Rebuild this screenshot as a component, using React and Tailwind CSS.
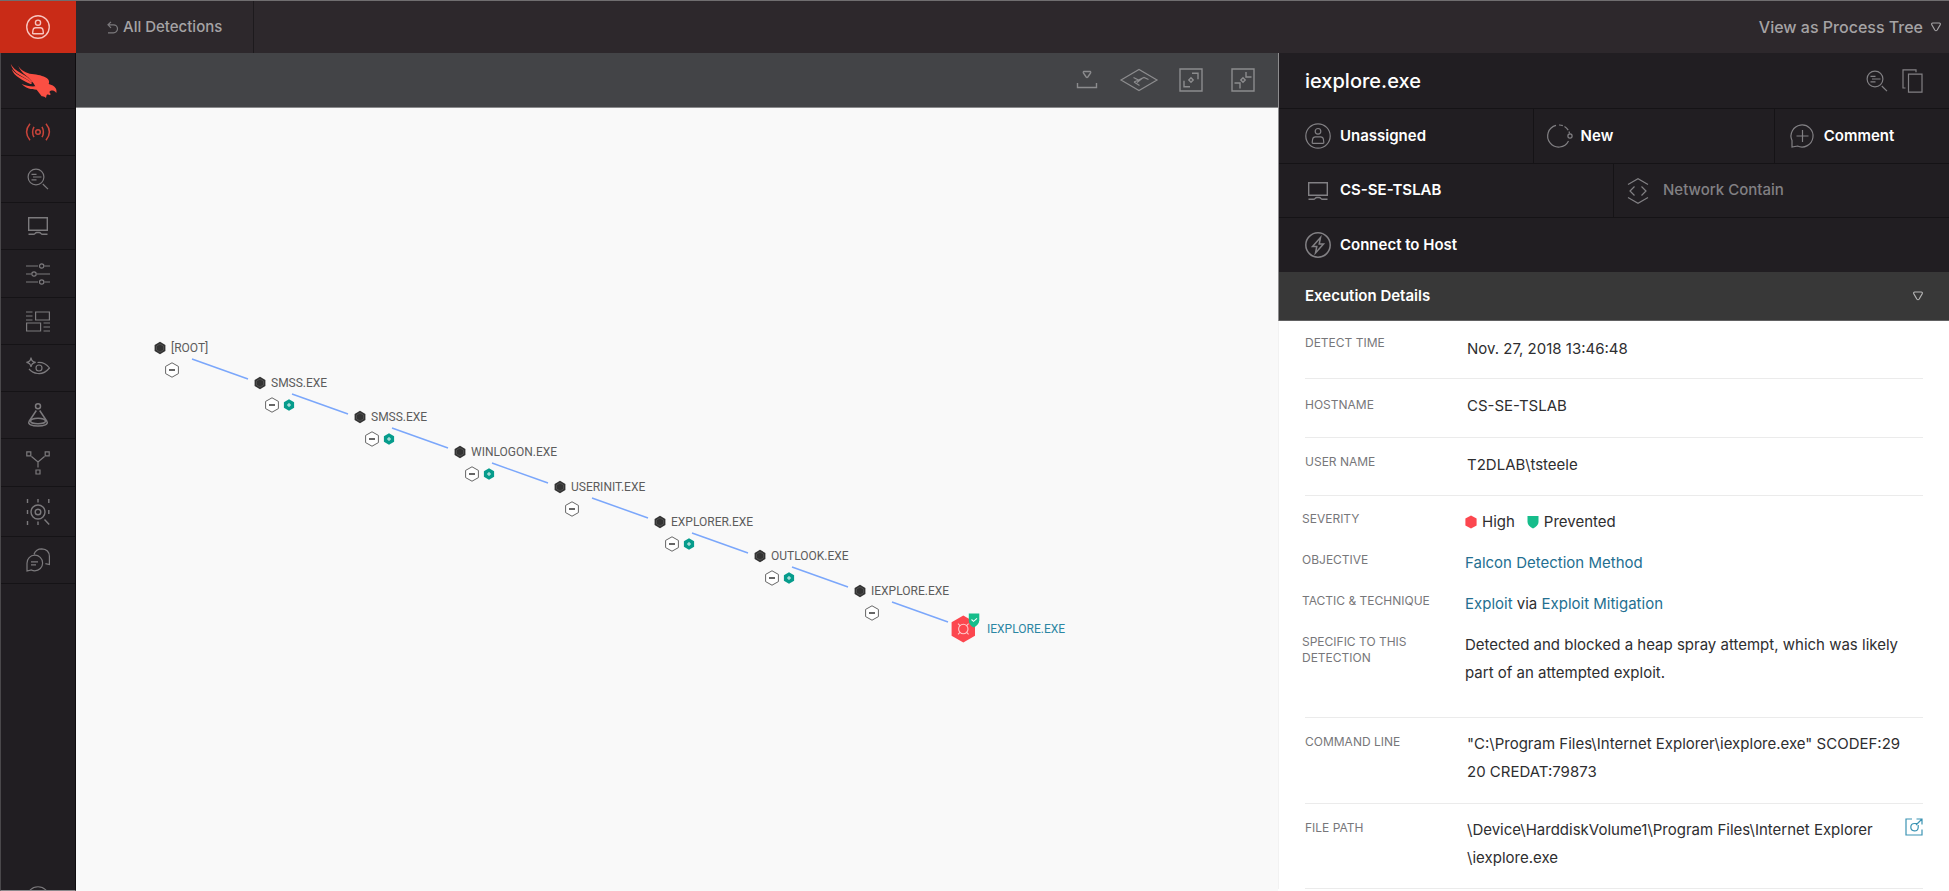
import React, { useState } from 'react';

const Icon = ({ w = 24, h = 24, sw = 1.2, className = '', children }) => (
    <svg
        width={w}
        height={h}
        viewBox={`0 0 ${w} ${h}`}
        fill="none"
        stroke="currentColor"
        strokeWidth={sw}
        className={`shrink-0 overflow-visible ${className}`}
        aria-hidden="true"
    >
        {children}
    </svg>
);

const UserCircle = ({ w = 26, sw = 1.2 }) => (
    <svg width={w} height={w} viewBox="0 0 26 26" fill="none" stroke="currentColor" strokeWidth={sw} className="shrink-0" aria-hidden="true">
        <circle cx="13" cy="13" r="12.2" />
        <circle cx="13" cy="8.3" r="2.8" />
        <path d="M8 20.3q-.9 0-.8-1l.4-3q.3-2.500 2.800-2.500h5.200q2.500 0 2.800 2.500l.4 3q.1 1-.8 1z" />
    </svg>
);

const Falcon = () => (
    <svg width="48" height="36" viewBox="30 186 144 108" fill="#fb4f43" aria-hidden="true">
        <path d="M55 194C63 208 78 216 96 219C112 221 130 224 140 231C147 236 149 243 146 249C155 251 163 255 167 262C170 267 170 272 169 276C164 269 158 268 152 269C147 271 148 275 152 279L150 283C146 280 142 280 140 282L138 291C134 288 130 285 125 286C120 280 115 272 110 266C94 266 78 262 65 249C78 255 92 257 106 256C100 244 88 232 76 222C66 214 59 205 55 194z" />
        <path d="M32 188C38 200 48 208 62 216C76 224 89 232 97 243L94 245C84 236 72 230 60 223C45 214 35 202 32 188z" />
        <path d="M35 204C44 216 56 223 68 229C80 235 90 240 96 248L91 249C80 244 68 238 58 231C46 224 38 215 35 204z" />
    </svg>
);

const Signal = () => (
    <Icon sw={1.5}>
        <circle cx="12" cy="12" r="2.3" />
        <path d="M8 6.8Q5.2 12 8 17.2M16 6.8Q18.8 12 16 17.2M4 3.8Q-2.8 12 4 20.2M20 3.8Q26.8 12 20 20.2" />
    </Icon>
);

const SearchLines = () => (
    <Icon>
        <circle cx="10" cy="10" r="7.9" />
        <path d="M5.5 7.3h5M7 10h8.5M5.5 12.8h5M16.8 17l5.2 5.2" />
    </Icon>
);

const Monitor = () => (
    <Icon sw={1.4}>
        <path d="M2.7 3.7h18.6v12.6H2.7zM2.5 20.3h5q1 0 1.7-.9t1.6-.9h2.4q.9 0 1.6.9t1.7.9h5" />
    </Icon>
);

const Sliders = () => (
    <Icon>
        <path d="M0 4h12M18.5 4H24M0 12h5M11 12h13M0 20h12M18.5 20H24" />
        <circle cx="15.7" cy="4" r="2.2" />
        <circle cx="8" cy="12" r="2.2" />
        <circle cx="15.7" cy="20" r="2.2" />
    </Icon>
);

const Dashboard = () => (
    <Icon>
        <path d="M9.6 3h13.8v8H9.6zM.6 14h14v8H.6zM0 3h6.5M0 7h6.5M0 11h6.5M17.5 14H24M17.5 18H24M17.5 22H24" />
    </Icon>
);

const Eye = () => (
    <Icon>
        <path d="M5 1.6q.5 4.2 4.7 4.7Q5.5 6.8 5 11 4.5 6.8.4 6.3 4.5 5.8 5 1.6zM11.5 6.500q7-.8 12 5.500-5.500 6.500-12 5.500-5-.5-8.500-4.500" />
        <circle cx="13" cy="12" r="3" />
    </Icon>
);

const Flask = () => (
    <Icon sw={1.5}>
        <circle cx="12" cy="3.3" r="2.5" />
        <path d="M10.3 7.5L3 18.5M13.7 7.5L21 18.5M3 18.5c-1.5 3 3 4.5 9 4.5s10.5-1.5 9-4.5" />
        <ellipse cx="12" cy="18" rx="7.5" ry="2.8" />
    </Icon>
);

const Branch = () => (
    <Icon>
        <path d="M.8.8h4v4h-4zM19.2.8h4v4h-4zM10 19h4v4h-4zM5.5 5.5l6.5 5.5 6.5-5.5M12 11v5.5" />
    </Icon>
);

const Target = () => (
    <Icon h={26} sw={1.4}>
        <circle cx="12" cy="13" r="7" />
        <circle cx="12" cy="13" r="2.8" />
        <path d="M1.5 0v4M12 0v3.5M22.8 0v4M1.5 11v4M22.8 11v4M1.5 22v4M12 22.5V26M18.5 20.5l4.7 5" />
    </Icon>
);

const Chats = () => (
    <Icon>
        <path d="M1 23V15.2a7.8 7.8 0 1 1 7.8 7.6q-1.8 0-3.4-.8zM8 6.3Q10 .8 15.8.8q7.4.5 7.6 7.5v8.2l-4-.8M5 13.8h7M5 16.8h5" />
    </Icon>
);

const Undo = () => (
    <Icon w={11} h={13}>
        <path d="M4 .8L1 3.8l3 3M1 3.8h5.5a3.800 3.800 0 0 1 0 8H1" />
    </Icon>
);

const Caret = () => (
    <Icon w={12} h={10}>
        <path d="M2.8 1h6.4q1.6.2 1 1.7L7.2 8q-1.2 1.5-2.4 0L1.8 2.7q-.6-1.5 1-1.7z" />
    </Icon>
);

const Download = () => (
    <Icon sw={1.4}>
        <path d="M9 3.5h6q1 .3.6 1.3L12.8 9q-.8 1-1.6 0L8.4 4.8Q8 3.8 9 3.5zM2.5 15v4.5h19V15" />
    </Icon>
);

const Diamond = () => (
    <Icon w={38} h={24}>
        <path d="M1 12L19 1.5 37 12 19 22.5zM13.5 9.5l5 2.5 5.5-2.5 4.5 2M22 10.5L17 14.5M18.5 12l-4.5 2M14 14l5.5 3.5" />
    </Icon>
);

const Expand = () => (
    <Icon sw={1.4}>
        <path d="M1 1h22v22H1zM13 5.2h6v6M11 18.8H5v-6M12 9.8l2.2 2.2-2.2 2.2L9.8 12z" />
    </Icon>
);

const Collapse = () => (
    <Icon sw={1.4}>
        <path d="M1 1h22v22H1zM15 4v5h5.5M3.5 15H9v5.5M12 9.8l2.2 2.2-2.2 2.2L9.8 12z" />
    </Icon>
);

const Copy = () => (
    <Icon>
        <path d="M7.5 5.2h13.5v18H7.5zM4.5 19H2V.8h13v2.5" />
    </Icon>
);

const Progress = () => (
    <Icon w={26} h={26}>
        <path d="M10 2.4A11 11 0 1 0 22.5 18M13 2q2-.1 3.8.6M18.5 3.5q2.3 1.3 3.7 3.6M23 8.5l.5 1.8" />
        <circle cx="24" cy="13" r="2.1" />
    </Icon>
);

const CommentPlus = () => (
    <Icon>
        <path d="M2 23V16.5A11 11 0 1 1 7.5 22zM12.5 6v12M6.5 12h12" />
    </Icon>
);

const Contain = () => (
    <Icon w={22} h={26}>
        <path d="M1 6.5l10-5.7 10 5.7M1 19.5l10 5.7 10-5.7M7.5 8.5L3 13l4.5 4.5M14.5 8.5L19 13l-4.5 4.5" />
    </Icon>
);

const Bolt = () => (
    <Icon w={26} h={26} sw={1.5}>
        <circle cx="13" cy="13" r="12.2" />
        <path d="M15.5 5.5l-8 9h4.3l-1.3 6.5 8-9h-4.3z" />
    </Icon>
);

const OpenLink = () => (
    <Icon w={18} h={18}>
        <path d="M7 1H1v16h16v-5.5M11.5 1H17v5.5M17 1l-6 6M12 5.5H9.5a3.7 3.7 0 1 0 3.7 4V7" />
    </Icon>
);

const navItems = [
    { label: 'Activity', icon: Signal, height: 'h-[47px]', active: true },
    { label: 'Investigate', icon: SearchLines, height: 'h-[47px]' },
    { label: 'Hosts', icon: Monitor, height: 'h-[47px]' },
    { label: 'Configuration', icon: Sliders, height: 'h-12' },
    { label: 'Dashboards', icon: Dashboard, height: 'h-[47px]' },
    { label: 'Discover', icon: Eye, height: 'h-[47px]' },
    { label: 'Intelligence', icon: Flask, height: 'h-[47px]' },
    { label: 'Graph', icon: Branch, height: 'h-12' },
    { label: 'Search', icon: Target, height: 'h-[50px]' },
    { label: 'Support', icon: Chats, height: 'h-[47px]' },
];

const processes = [
    { name: '[ROOT]' },
    { name: 'SMSS.EXE', more: true },
    { name: 'SMSS.EXE', more: true },
    { name: 'WINLOGON.EXE', more: true },
    { name: 'USERINIT.EXE' },
    { name: 'EXPLORER.EXE', more: true },
    { name: 'OUTLOOK.EXE', more: true },
    { name: 'IEXPLORE.EXE' },
];

const nodeX = (i) => 84 + i * 100;
const nodeY = (i) => 240 + Math.round(i * 34.7);

const Sidebar = () => (
    <nav className="w-[76px] shrink-0 flex flex-col bg-[#211e22] border-l border-l-[#4a484b] border-r border-r-[#0f0d10] border-b border-b-[#8b898c] overflow-hidden">
        <a href="#home" aria-label="Falcon" className="h-14 shrink-0 flex items-center justify-center pr-2 border-b border-[#151316]">
            <Falcon />
        </a>
        {navItems.map(({ label, icon: NavIcon, height, active }) => (
            <button
                key={label}
                aria-label={label}
                className={`${height} shrink-0 flex items-center justify-center border-b border-[#151316] ${active ? 'text-[#c8443a]' : 'text-[#7c7a7d]'}`}
            >
                <NavIcon />
            </button>
        ))}
        <button aria-label="Account" className="mt-auto h-1 shrink-0 flex items-start justify-center overflow-hidden text-[#7c7a7d]">
            <UserCircle w={24} />
        </button>
    </nav>
);

const ProcessNode = ({ name, more, x, y }) => (
    <div className="absolute" style={{ left: x - 6, top: y - 8 }}>
        <div className="flex items-center gap-[5px] h-4 font-['Roboto','Liberation_Sans',sans-serif] text-xs text-[#5c5c5c] whitespace-nowrap">
            <svg width="12" height="14" viewBox="0 0 12 14" aria-hidden="true">
                <path d="M6 .8l5.4 3.1v6.2L6 13.2.6 10.1V3.9z" fill="#333" />
                <path d="M6 3l3.5 2v4L6 11 2.5 9V5z" fill="none" stroke="#555" strokeWidth=".8" />
            </svg>
            {name}
        </div>
        <div className="flex items-center gap-[3px] pl-[10px] pt-[6px]">
            <button aria-label={`Collapse ${name}`}>
                <svg width="16" height="16" viewBox="0 0 16 16" fill="#fff" stroke="#666" className="block">
                    <path d="M8 .8l6.4 3.6v7.2L8 15.2l-6.4-3.6V4.4z" />
                    <path d="M5 8h6" stroke="#333" strokeWidth="1.5" />
                </svg>
            </button>
            {more && (
                <button aria-label={`Show more of ${name}`}>
                    <svg width="12" height="12" viewBox="0 0 12 12" className="block">
                        <path d="M6 .3l5.1 2.9v5.6L6 11.7.9 8.8V3.2z" fill="#069c8c" />
                        <path d="M6 4v4M4 6h4" stroke="#d9f2ef" />
                    </svg>
                </button>
            )}
        </div>
    </div>
);

const ProcessTree = () => (
    <div className="relative flex-1 min-h-0 bg-[#f9f9f9] overflow-hidden">
        <svg className="absolute inset-0 w-full h-full" stroke="#7ba7fb" strokeWidth="1.5" aria-hidden="true">
            {processes.map((p, i) => (
                <line key={i} x1={nodeX(i) + 32} y1={nodeY(i) + 11} x2={nodeX(i) + 88} y2={nodeY(i) + 31} />
            ))}
        </svg>
        {processes.map((p, i) => (
            <ProcessNode key={i} {...p} x={nodeX(i)} y={nodeY(i)} />
        ))}
        <button className="absolute left-[874px] top-[505px] flex items-center gap-[7px] font-['Roboto','Liberation_Sans',sans-serif] text-xs text-[#2b86a3]">
            <svg width="30" height="32" viewBox="0 0 30 32" aria-hidden="true">
                <path d="M13.3 2.5l11.7 6.800v13.400l-11.700 6.800L1.600 22.700V9.300z" fill="#fc474f" />
                <g fill="none" stroke="#ffc9cb" strokeWidth="1.1">
                    <path d="M8 10.7l2.2 2.2M18.6 10.7l-2.2 2.2M8 21.3l2.2-2.2M18.6 21.3l-2.2-2.2" />
                    <circle cx="13.3" cy="16" r="4.7" />
                </g>
                <path d="M18.8.5h10.5v6.7c0 3.3-2.5 5.6-5.8 7.3-2.8-1.7-4.7-4-4.7-7.3z" fill="#16bd8b" />
                <path d="M21.5 6.5l2 1.8 3.5-3" fill="none" stroke="#fff" strokeWidth="1.1" />
            </svg>
            IEXPLORE.EXE
        </button>
    </div>
);

const Action = ({ icon: ActionIcon, className = '', children }) => (
    <button className={`h-full flex items-center text-[15px] font-semibold text-white ${className}`}>
        <span className="w-[26px] flex justify-center text-[#828084]">
            <ActionIcon />
        </span>
        {children}
    </button>
);

const DetailRow = ({ label, top = 'pt-4', className = '', children }) => (
    <div className={`flex items-start border-b border-[#ebebeb] ${className}`}>
        <dt className={`w-[162px] shrink-0 text-xs leading-4 text-[#77777a] ${top}`}>{label}</dt>
        <dd className="flex-1 min-w-0">{children}</dd>
    </div>
);

// Rows of the severity group share one divider
const DetectionRow = ({ label, children }) => (
    <div className="flex items-start">
        <dt className="w-[163px] pr-8 shrink-0 text-xs leading-4 text-[#77777a] pt-[3px]">{label}</dt>
        <dd className="flex-1 min-w-0">{children}</dd>
    </div>
);

const ExecutionDetails = () => (
    <dl className="px-[26px] text-[15px] leading-7 text-[#2e2e30] bg-white border-l border-[#f2f2f2]">
        <DetailRow label="DETECT TIME" top="pt-[14px]" className="h-[58px]">
            <p className="pt-[14px]">Nov. 27, 2018 13:46:48</p>
        </DetailRow>
        <DetailRow label="HOSTNAME" top="pt-[18px]" className="h-[59px]">
            <p className="pt-[13px]">CS-SE-TSLAB</p>
        </DetailRow>
        <DetailRow label="USER NAME" className="h-[58px]">
            <p className="pt-[13px]">T2DLAB\tsteele</p>
        </DetailRow>
        <div className="border-b border-[#ebebeb] pt-3 pb-[30px]">
            <div className="-ml-[3px] flex flex-col gap-[13px]">
                <DetectionRow label="SEVERITY">
                    <div className="flex items-center">
                        <svg width="12" height="14" viewBox="0 0 12 14" aria-hidden="true" className="mr-[5px]">
                            <path d="M6 .5l5.6 3v7L6 13.5.4 10.5v-7z" fill="#fc474f" />
                        </svg>
                        High
                        <svg width="12" height="14" viewBox="0 0 12 14" aria-hidden="true" className="ml-3 mr-[5px]">
                            <path d="M.5 1h11v6c0 3-2.5 5-5.5 6.5C3 12 .5 10 .5 7z" fill="#16bd8b" />
                        </svg>
                        Prevented
                    </div>
                </DetectionRow>
                <DetectionRow label="OBJECTIVE">
                    <a href="#objective" className="text-[#246f91]">Falcon Detection Method</a>
                </DetectionRow>
                <DetectionRow label="TACTIC &amp; TECHNIQUE">
                    <a href="#tactic" className="text-[#246f91]">Exploit</a> via{' '}
                    <a href="#technique" className="text-[#246f91]">Exploit Mitigation</a>
                </DetectionRow>
                <DetectionRow label="SPECIFIC TO THIS DETECTION">
                    Detected and blocked a heap spray attempt, which was likely part of an attempted exploit.
                </DetectionRow>
            </div>
        </div>
        <DetailRow label="COMMAND LINE" className="pb-[17px]">
            <p className="pt-3">"C:\Program Files\Internet Explorer\iexplore.exe" SCODEF:29<br />20 CREDAT:79873</p>
        </DetailRow>
        <DetailRow label="FILE PATH" className="pb-4">
            <div className="flex items-start justify-between pt-3">
                <p>\Device\HarddiskVolume1\Program Files\Internet Explorer<br />\iexplore.exe</p>
                <a href="#file" aria-label="Open file path" className="pt-[2px] text-[#3b93b3]">
                    <OpenLink />
                </a>
            </div>
        </DetailRow>
    </dl>
);

const DetailsPanel = () => {
    const [open, setOpen] = useState(true);

    return (
        <aside className="w-[671px] shrink-0 flex flex-col bg-white overflow-hidden">
            <div className="shrink-0 border-l border-[#8d8c8e] bg-[#211e22]">
                <header className="h-14 flex items-center justify-between pl-[26px] pr-6 border-b border-[#151316]">
                    <h1 className="text-xl font-medium text-white">iexplore.exe</h1>
                    <div className="flex gap-3 text-[#828084]">
                        <button aria-label="Investigate"><SearchLines /></button>
                        <button aria-label="Copy"><Copy /></button>
                    </div>
                </header>
                <div className="h-[55px] flex border-b border-[#151316]">
                    <Action icon={UserCircle} className="w-[38%] pl-[26px] gap-[9px] border-r border-[#151316]">Unassigned</Action>
                    <Action icon={Progress} className="w-[36%] pl-3 gap-[9px] border-r border-[#151316]">New</Action>
                    <Action icon={CommentPlus} className="flex-1 pl-[14px] gap-[9px]">Comment</Action>
                </div>
                <div className="h-[54px] flex border-b border-[#151316]">
                    <Action icon={Monitor} className="w-1/2 pl-[26px] gap-[9px] border-r border-[#151316]">CS-SE-TSLAB</Action>
                    <button className="flex-1 flex items-center pl-[13px] gap-[14px] text-[15px] font-medium text-[#828084]">
                        <Contain />
                        Network Contain
                    </button>
                </div>
                <div className="h-[54px] flex">
                    <Action icon={Bolt} className="pl-[26px] gap-[9px]">Connect to Host</Action>
                </div>
                <button
                    onClick={() => setOpen(!open)}
                    className="w-full h-[49px] flex items-center justify-between pl-[26px] pr-[25px] bg-[#383838] border-b border-[#616162] text-[15px] font-semibold text-white"
                >
                    Execution Details
                    <span className="text-[#b5b5b5]"><Caret /></span>
                </button>
            </div>
            {open && <ExecutionDetails />}
        </aside>
    );
};

const App = () => (
    <div className="h-screen flex flex-col bg-[#f9f9f9] font-['Inter','Liberation_Sans',sans-serif] overflow-hidden">
        <header className="h-[53px] shrink-0 flex items-stretch bg-[#2d282c] border-t border-[#706e70]">
            <button aria-label="Profile" className="w-[76px] flex items-center justify-center bg-[#c92b17] text-[#f7c5bf]">
                <UserCircle w={24} sw={1.5} />
            </button>
            <a href="#detections" className="flex items-center gap-[5px] px-[31px] border-r border-[#1d1a1d] text-[15px] font-medium text-[#a5a3a5]">
                <span className="text-[#7c7a7d]"><Undo /></span>
                All Detections
            </a>
            <button className="ml-auto pr-[7px] flex items-center gap-[7px] text-base font-medium text-[#a5a3a5]">
                View as Process Tree
                <Caret />
            </button>
        </header>
        <div className="flex-1 min-h-0 flex">
            <Sidebar />
            <main className="flex-1 min-w-0 flex flex-col">
                <div className="h-[55px] shrink-0 flex items-center justify-end pr-[23px] bg-[#434447] border-b border-[#8b8b8d] text-[#8c8c8e]">
                    <button aria-label="Download" className="mr-[21px]"><Download /></button>
                    <button aria-label="Layout" className="mr-[21px]"><Diamond /></button>
                    <button aria-label="Expand" className="mr-7"><Expand /></button>
                    <button aria-label="Collapse"><Collapse /></button>
                </div>
                <ProcessTree />
            </main>
            <DetailsPanel />
        </div>
    </div>
);

export default App;
